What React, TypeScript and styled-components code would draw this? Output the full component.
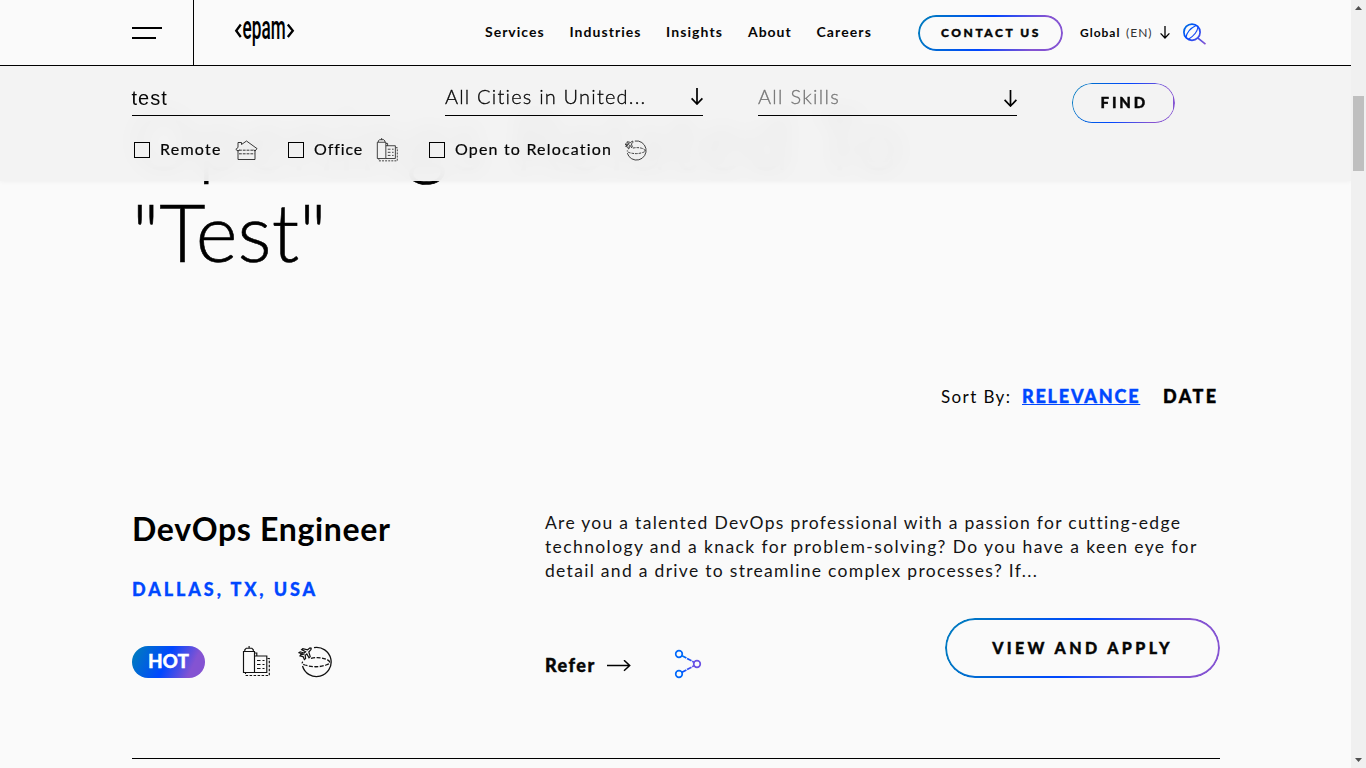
import React from "react";
import styled, { createGlobalStyle, css } from "styled-components";

const GlobalStyle = createGlobalStyle`
  * { box-sizing: border-box; }
  html, body { margin: 0; height: 100%; overflow: hidden; }
  body { background: #fafafa; color: #060606; font-family: Lato, "Open Sans", sans-serif; }
  svg { display: block; flex: none; }
`;

const brand = "linear-gradient(115deg, #0078c2 7%, #0047ff 47%, #8453d2 80%)";

const Window = styled.div`
  display: flex;
  width: 1366px;
  height: 768px;
  overflow: hidden;
`;

const Page = styled.div`
  position: relative;
  width: 1351px;
  height: 768px;
  overflow: hidden;
`;

const Header = styled.header`
  position: absolute;
  inset: 0 0 auto 0;
  z-index: 3;
  display: flex;
  align-items: flex-start;
  height: 66px;
  background: #fafafa;
  border-bottom: 1px solid #000;
`;

const MenuCell = styled.div`
  width: 194px;
  height: 65px;
  padding: 27px 0 0 132px;
  border-right: 1px solid #000;
`;

const MenuLine = styled.div<{ $w: number }>`
  width: ${(p) => p.$w}px;
  height: 2px;
  margin-bottom: 8px;
  background: #000;
`;

const LogoCell = styled.div`
  width: 291px;
  padding: 14px 0 0 40px;
`;

const Nav = styled.nav`
  display: flex;
  width: 433px;
  padding-top: 22px;
  font-size: 14px;
  font-weight: 700;
  line-height: 20px;
  white-space: nowrap;
`;

const NavLink = styled.a<{ $w: number; $ls: number }>`
  width: ${(p) => p.$w}px;
  letter-spacing: ${(p) => p.$ls}px;
`;

const outline = css<{ $b: number }>`
  position: relative;
  &::before {
    content: "";
    position: absolute;
    inset: 0;
    border-radius: inherit;
    padding: ${(p) => p.$b}px;
    background: ${brand};
    mask: linear-gradient(#000 0 0) content-box exclude, linear-gradient(#000 0 0);
  }
`;

const PillButton = styled.button<{
  $w: number; $h: number; $b: number; $fs: number; $ls: number; $lift?: number; $lead?: number;
}>`
  ${outline}
  width: ${(p) => p.$w}px;
  height: ${(p) => p.$h}px;
  padding: 0 0 ${(p) => p.$lift ?? 0}px ${(p) => p.$lead ?? p.$ls}px;
  border: 0;
  border-radius: ${(p) => p.$h / 2}px;
  background: transparent;
  color: #060606;
  font: 900 ${(p) => p.$fs}px Lato, sans-serif;
  -webkit-text-stroke: 0.4px;
  letter-spacing: ${(p) => p.$ls}px;
  white-space: nowrap;
`;

const HeaderAction = styled.div`
  padding-top: 15px;
`;

const Locale = styled.div`
  display: flex;
  width: 80px;
  padding-top: 23px;
  margin-left: 17px;
  gap: 4px;
  font-size: 12px;
  line-height: 20px;
  letter-spacing: 1px;
  white-space: nowrap;
`;

const LocaleName = styled.span`
  width: 42px;
  font-weight: 700;
`;

const LocaleCode = styled.span`
  font-weight: 400;
  color: #333;
`;

const HeaderIcon = styled.div<{ $top: number; $w: number }>`
  width: ${(p) => p.$w}px;
  padding-top: ${(p) => p.$top}px;
`;

const SearchPanel = styled.form`
  position: absolute;
  inset: 66px 0 auto 0;
  z-index: 2;
  height: 115px;
  padding-left: 132px;
  background: rgba(242, 242, 242, 0.945);
  backdrop-filter: blur(10px);
  box-shadow: 0 0 5px rgba(0, 0, 0, 0.06);
`;

const Fields = styled.div`
  display: flex;
  height: 67px;
`;

const Field = styled.div<{ $muted?: boolean }>`
  display: flex;
  justify-content: space-between;
  width: ${(p) => (p.$muted ? 259 : 258)}px;
  height: 50px;
  margin-right: 55px;
  padding-top: 18px;
  border-bottom: 1px solid #000;
  font-size: 20px;
  font-weight: 300;
  line-height: 25px;
  letter-spacing: ${(p) => (p.$muted ? 1.3 : 1.2)}px;
  color: ${(p) => (p.$muted ? "#777" : "#060606")};
  -webkit-text-stroke: 0.3px;
`;

const Keyword = styled.span`
  padding-top: 2px;
  margin-left: -0.5px;
  font-family: "Liberation Sans", Arial, sans-serif;
  font-weight: 400;
  letter-spacing: 1px;
  -webkit-text-stroke: 0;
`;

const FieldArrow = styled.span<{ $top: number }>`
  padding-top: ${(p) => p.$top}px;
`;

const FindCell = styled.div`
  padding-top: 17px;
`;

const Options = styled.div`
  display: flex;
  padding-left: 2px;
`;

const Option = styled.label<{ $w: number }>`
  display: flex;
  align-items: center;
  width: ${(p) => p.$w}px;
  height: 34px;
  font-size: 16px;
  white-space: nowrap;
`;

const Box = styled.span`
  width: 16px;
  height: 16px;
  margin-right: 10px;
  border: 1px solid #000;
`;

const OptionText = styled.span<{ $w: number; $ls: number }>`
  width: ${(p) => p.$w}px;
  padding-bottom: 3px;
  letter-spacing: ${(p) => p.$ls}px;
  -webkit-text-stroke: 0.2px;
`;

const Content = styled.main`
  padding: 93px 131px 0 132px;
`;

const Heading = styled.h1`
  margin: 0;
  font-size: 80px;
  font-weight: 300;
  line-height: 92px;
  color: #000;
  -webkit-text-stroke: 0.6px;
`;

const HeadingLine = styled.span<{ $ls: number }>`
  display: block;
  letter-spacing: ${(p) => p.$ls}px;
  white-space: nowrap;
`;

const SortRow = styled.div`
  display: flex;
  justify-content: flex-end;
  margin-top: 108px;
  font-size: 18px;
  line-height: 24px;
  white-space: nowrap;
`;

const SortLabel = styled.span`
  width: 81px;
  font-size: 17px;
  letter-spacing: 1.4px;
`;

const SortLink = styled.a<{ $active?: boolean; $w: number }>`
  width: ${(p) => p.$w}px;
  margin-top: -1px;
  font-weight: 900;
  letter-spacing: ${(p) => (p.$active ? 1.8 : 2.4)}px;
  -webkit-text-stroke: 0.4px;
  color: ${(p) => (p.$active ? "#0047ff" : "#000")};
  text-decoration: ${(p) => (p.$active ? "underline" : "none")};
  text-decoration-thickness: 1px;
  text-underline-offset: 1px;
`;

const Job = styled.article`
  display: flex;
  height: 350px;
  border-bottom: 1px solid #000;
`;

const JobInfo = styled.div`
  width: 413px;
  padding-top: 98px;
`;

const JobTitle = styled.h2`
  margin: 0;
  font-size: 32px;
  font-weight: 700;
  line-height: 44px;
  letter-spacing: 0.67px;
  color: #000;
`;

const JobPlace = styled.div`
  margin-top: 26px;
  font-size: 18px;
  font-weight: 900;
  line-height: 24px;
  letter-spacing: 2.9px;
  color: #0047ff;
  -webkit-text-stroke: 0.3px;
`;

const Tags = styled.div`
  display: flex;
  margin-top: 45px;
`;

const Hot = styled.span`
  width: 73px;
  height: 32px;
  margin-right: 37px;
  border-radius: 16px;
  background: ${brand};
  color: #fff;
  font-size: 19px;
  font-weight: 900;
  line-height: 30px;
  text-align: center;
  -webkit-text-stroke: 0.3px;
`;

const TagIcon = styled.span`
  width: 56px;
`;

const JobBody = styled.div`
  width: 675px;
  padding-top: 102px;
`;

const JobText = styled.p`
  margin: 0;
  height: 107px;
  font-size: 17.5px;
  line-height: 24px;
`;

const TextLine = styled.span<{ $ls: number }>`
  display: block;
  letter-spacing: ${(p) => p.$ls}px;
  white-space: nowrap;
  color: #141414;
`;

const Actions = styled.div`
  display: flex;
`;

const Refer = styled.a`
  display: flex;
  width: 129px;
  padding-top: 35px;
  font-size: 18px;
  font-weight: 900;
  line-height: 24px;
  letter-spacing: 1.5px;
  -webkit-text-stroke: 0.4px;
`;

const ReferText = styled.span`
  width: 62px;
`;

const ReferArrow = styled.span`
  padding-top: 7px;
`;

const Share = styled.a`
  width: 271px;
  padding-top: 31px;
`;

const Scrollbar = styled.div`
  display: flex;
  flex-direction: column;
  align-items: center;
  width: 15px;
  height: 768px;
  padding: 6px 0;
  background: #f0f0f0;
`;

const Thumb = styled.div`
  width: 11px;
  height: 75px;
  margin: 86px 0 auto;
  background: #bfbfbf;
`;

const Down = ({ w, h, sw = 1.5 }: { w: number; h: number; sw?: number }) => (
  <svg width={w} height={h} viewBox={`0 0 ${w} ${h}`} fill="none" stroke="#000" strokeWidth={sw}>
    <path d={`M${w / 2} 0V${h - 1}M.6 ${h - w / 2 - 0.6}L${w / 2} ${h - 1}L${w - 0.6} ${h - w / 2 - 0.6}`} />
  </svg>
);

const House = () => (
  <svg width="23" height="21" viewBox="0 0 23 21" fill="none" stroke="#222" strokeWidth=".9">
    <path d="M3 11L.8 9.400L3 7.500V2.500H6.500V4.500L11.500 1L22 8.600L20 11M3 10V19.500H20V10" />
    <path d="M4 10.200h15.500M4 13.800h15.500" strokeDasharray="2.800 1" />
    <path d="M3 11L4.500 10M20 11L18.500 10" />
  </svg>
);

const Buildings = ({ w, h, light }: { w: number; h: number; light?: boolean }) => (
  <svg width={w} height={h} viewBox="0 0 28 31" fill="none" stroke="#111" strokeWidth={light ? 1 : 1.15}>
    <path d="M1.500 5.500h11V26.500H1.500zM2.800 5.200V3.800l1.500-1.600h5.500l1.500 1.600v1.400M7.100 2.200V0M12.600 10h12.200v16.500H12.600M12.600 7h2.200v3" />
    <path d="M15 14.500h3.500M20.500 14.500h2M15 18.500h3.500M20.500 18.500h2M15 22.500h3.500M20.500 22.500h2" />
    <path d="M25.500 12.500h1.800V29.500H3.500v-2.500" strokeDasharray="2.500 1.500" />
  </svg>
);

const Globe = ({ w, h, light }: { w: number; h: number; light?: boolean }) => (
  <svg width={w} height={h} viewBox="0 0 34 32" fill="none" stroke="#111" strokeWidth={light ? 1.2 : 1.3}>
    <path d="M16 1.600A14.600 14.600 0 1 1 4.500 20" />
    <path d="M13 12.300Q22 10.500 29 13.500Q35 17 28 19Q18 22.500 7 19Q3 17.500 4.800 15.800" strokeDasharray="4 1.500" />
    <path
      strokeWidth="1.200"
      d="M1 6.800L2.200 5.800L6 7L7.600 5.800L3.600 3.600L4.800 2.600L9.600 3.800L12 1.900L13.200 2.200L13 3.600L10.800 6L12.200 10.600L11 11.800L8.800 8L7.200 9.400L7.600 12.600L6.400 13.600L5 10.600L2 9.800L2.800 8.600L5 8.200z"
    />
  </svg>
);

const Gradient = ({ id }: { id: string }) => (
  <linearGradient id={id} x1="0" y1="0" x2="1" y2="0.5">
    <stop offset="0" stopColor="#0078f0" />
    <stop offset=".45" stopColor="#0052ff" />
    <stop offset="1" stopColor="#6a50e4" />
  </linearGradient>
);

const SearchIcon = () => (
  <svg width="24" height="23" viewBox="0 0 24 23" fill="none" stroke="url(#lens)" strokeWidth="1.7">
    <defs>
      <linearGradient id="lens" gradientUnits="userSpaceOnUse" x1="0" y1="0" x2="23" y2="20">
        <stop offset="0" stopColor="#0078d8" />
        <stop offset=".4" stopColor="#0047ff" />
        <stop offset="1" stopColor="#8453d2" />
      </linearGradient>
    </defs>
    <circle cx="9" cy="9.200" r="8.100" />
    <path d="M15 15.200L22.500 21.200" />
    <path d="M3 14.500Q4 7 13 2.500M5.500 16.200Q14 11 15 4" strokeWidth="1.1" />
  </svg>
);

const ShareIcon = () => (
  <svg width="28" height="30" viewBox="0 0 28 30" fill="none" strokeWidth="1.7">
    <defs><Gradient id="share" /></defs>
    <g stroke="#0068fa">
      <circle cx="5" cy="5" r="3.300" />
      <circle cx="5" cy="25" r="3.300" />
    </g>
    <circle cx="23" cy="15" r="3.300" stroke="#6a50e4" />
    <path d="M8 6.700L20 13.200M8 23.300L20 16.800" stroke="url(#share)" strokeDasharray="5 .8" />
  </svg>
);

const Logo = () => (
  <svg width="62" height="38" viewBox="0 0 62 38">
    <path d="M6.800 10.500L2.200 16.800L6.800 23M53.800 10.500L58.800 16.800L53.800 23" fill="none" stroke="#000" strokeWidth="2.3" />
    <text transform="translate(8.600 25) scale(.52 1)" fontFamily="Roboto, sans-serif" fontWeight="500" fontSize="33">epam</text>
  </svg>
);

const nav: [string, number, number][] = [
  ["Services", 84.5, 1],
  ["Industries", 96.5, 1.05],
  ["Insights", 82, 1.1],
  ["About", 68.5, 0.95],
  ["Careers", 60, 1.1],
];

export default function App() {
  return (
    <Window>
      <GlobalStyle />
      <Page>
        <Header>
          <MenuCell>
            <MenuLine $w={30} />
            <MenuLine $w={24} />
          </MenuCell>
          <LogoCell><Logo /></LogoCell>
          <Nav>
            {nav.map(([label, w, ls]) => (
              <NavLink key={label} $w={w} $ls={ls}>{label}</NavLink>
            ))}
          </Nav>
          <HeaderAction>
            <PillButton $w={145} $h={36} $b={2} $fs={12} $ls={2.55} $lift={1} $lead={1}>CONTACT US</PillButton>
          </HeaderAction>
          <Locale>
            <LocaleName>Global</LocaleName>
            <LocaleCode>(EN)</LocaleCode>
          </Locale>
          <HeaderIcon $top={26} $w={23}><Down w={10} h={13} sw={1.3} /></HeaderIcon>
          <HeaderIcon $top={23} $w={24}><SearchIcon /></HeaderIcon>
        </Header>

        <SearchPanel>
          <Fields>
            <Field><Keyword>test</Keyword></Field>
            <Field>
              <span>All Cities in United...</span>
              <FieldArrow $top={4}><Down w={12} h={17} sw={1.7} /></FieldArrow>
            </Field>
            <Field $muted>
              <span>All Skills</span>
              <FieldArrow $top={6}><Down w={13} h={17} sw={1.7} /></FieldArrow>
            </Field>
            <FindCell>
              <PillButton type="button" $w={102.5} $h={40} $b={1.4} $fs={15} $ls={2.8} $lift={3} $lead={2}>FIND</PillButton>
            </FindCell>
          </Fields>
          <Options>
            <Option $w={154}>
              <Box /><OptionText $w={75} $ls={1.25}>Remote</OptionText><House />
            </Option>
            <Option $w={141}>
              <Box /><OptionText $w={61.5} $ls={0.9}>Office</OptionText><Buildings w={22} h={24} light />
            </Option>
            <Option $w={220}>
              <Box /><OptionText $w={169} $ls={1.18}>Open to Relocation</OptionText><Globe w={23} h={21} light />
            </Option>
          </Options>
        </SearchPanel>

        <Content>
          <Heading>
            <HeadingLine $ls={3.4}>Openings Related To</HeadingLine>
            <HeadingLine $ls={0.1}>"Test"</HeadingLine>
          </Heading>
          <SortRow>
            <SortLabel>Sort By:</SortLabel>
            <SortLink $active $w={141}><span>RELEVANCE</span></SortLink>
            <SortLink $w={57}>DATE</SortLink>
          </SortRow>
          <Job>
            <JobInfo>
              <JobTitle>DevOps Engineer</JobTitle>
              <JobPlace>DALLAS, TX, USA</JobPlace>
              <Tags>
                <Hot>HOT</Hot>
                <TagIcon><Buildings w={28} h={31} /></TagIcon>
                <Globe w={34} h={32} />
              </Tags>
            </JobInfo>
            <JobBody>
              <JobText>
                <TextLine $ls={1.29}>Are you a talented DevOps professional with a passion for cutting-edge</TextLine>
                <TextLine $ls={1.39}>technology and a knack for problem-solving? Do you have a keen eye for</TextLine>
                <TextLine $ls={1.3}>detail and a drive to streamline complex processes? If...</TextLine>
              </JobText>
              <Actions>
                <Refer>
                  <ReferText>Refer</ReferText>
                  <ReferArrow>
                    <svg width="24" height="12" viewBox="0 0 24 12" fill="none" stroke="#000" strokeWidth="1.500">
                      <path d="M0 5.500H22.500M17 .2L22.700 5.500L17 10.800" />
                    </svg>
                  </ReferArrow>
                </Refer>
                <Share><ShareIcon /></Share>
                <PillButton $w={275} $h={60} $b={2} $fs={16} $ls={3.4} $lift={2} $lead={0}>VIEW AND APPLY</PillButton>
              </Actions>
            </JobBody>
          </Job>
        </Content>
      </Page>
      <Scrollbar>
        <svg width="7" height="4"><path d="M0 4L3.500 0L7 4z" fill="#505050" /></svg>
        <Thumb />
        <svg width="7" height="4"><path d="M0 0L3.500 4L7 0z" fill="#505050" /></svg>
      </Scrollbar>
    </Window>
  );
}
